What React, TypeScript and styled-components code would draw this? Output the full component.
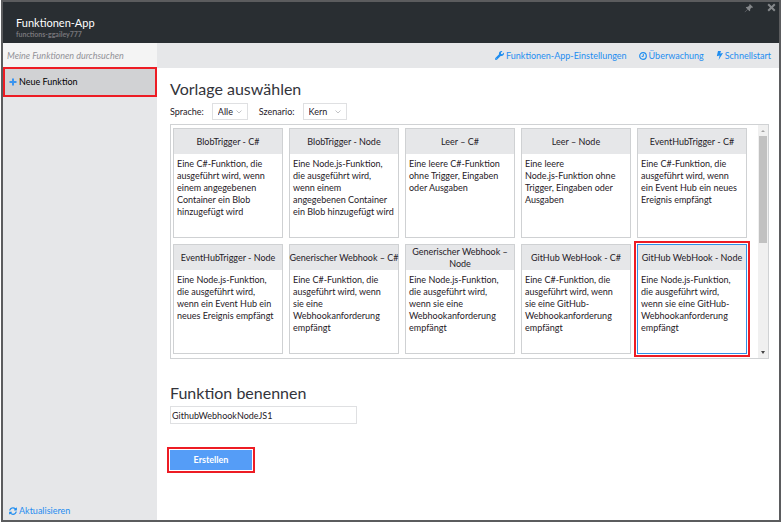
import React, { useState } from "react";
import styled, { createGlobalStyle } from "styled-components";
import { FaWrench, FaSyncAlt } from "react-icons/fa";

const GlobalStyle = createGlobalStyle`
  *, *::before, *::after { box-sizing: border-box; }
  body { margin: 0; background: #fff; }
  body, button, input, select {
    font-family: Lato, "Open Sans", sans-serif;
    font-size: 9px;
    line-height: 12px;
    color: #1f2027;
  }
`;

const Shell = styled.div`
  min-height: 100vh;
  padding: 0 1px 1px;
  display: flex;
`;

const Blade = styled.div`
  flex: 1;
  min-width: 0;
  display: flex;
  flex-direction: column;
  border: 2px solid #5b5c5e;
`;

const Header = styled.header`
  display: flex;
  justify-content: space-between;
  align-items: flex-start;
  height: 41px;
  padding: 0 2px 0 13px;
  background: #292e32;
`;

const AppTitle = styled.h1`
  margin: 14px 0 0;
  font-size: 11px;
  line-height: 14px;
  font-weight: 400;
  color: #fff;
`;

const AppName = styled.p`
  margin: 0;
  font-size: 7px;
  line-height: 9px;
  font-weight: 700;
  color: #77757a;
`;

const WindowActions = styled.div`
  display: flex;
  gap: 11px;
`;

const IconButton = styled.button`
  display: flex;
  padding: 1px;
  border: 0;
  background: none;
  color: #85888b;
  cursor: pointer;
`;

const Body = styled.div`
  flex: 1;
  display: flex;
`;

const Sidebar = styled.nav`
  flex: 0 0 154px;
  display: flex;
  flex-direction: column;
  background: #e6e7e9;
`;

const SearchInput = styled.input`
  width: 100%;
  height: 24px;
  padding: 0 4px;
  border: 0;
  background: #f4f4f4;
  font-style: italic;
  &::placeholder { color: #929298; opacity: 1; }
`;

const NewFunction = styled.button`
  display: flex;
  align-items: center;
  gap: 2px;
  height: 30px;
  padding: 0 4px;
  border: 2px solid #ed1c24;
  background: #d1d2d4;
  color: #000;
  cursor: pointer;
  svg { color: #3a94ef; }
`;

const ActionLink = styled.a`
  display: inline-flex;
  align-items: center;
  gap: 2px;
  color: #1f8df0;
  text-decoration: none;
`;

const SidebarFooter = styled.div`
  margin-top: auto;
  padding: 0 6px 2px;
`;

const Main = styled.main`
  flex: 1;
  min-width: 0;
  display: flex;
  flex-direction: column;
  background: #fff;
`;

const Toolbar = styled.div`
  display: flex;
  justify-content: flex-end;
  align-items: center;
  gap: 12px;
  height: 25px;
  padding: 0 8px;
  background: #e6e7e9;
`;

const Content = styled.div`
  padding: 11px 10px 12px 13px;
`;

const SectionTitle = styled.h2`
  margin: 0;
  font-size: 16px;
  line-height: 20px;
  font-weight: 400;
  color: #33343b;
`;

const Filters = styled.div`
  display: flex;
  gap: 11px;
  margin: 4px 0;
`;

const Filter = styled.label`
  display: flex;
  align-items: center;
  gap: 8px;
`;

const SelectBox = styled.span<{ $width: number }>`
  display: grid;
  align-items: center;
  width: ${(p) => p.$width}px;
  height: 17px;
  border: 1px solid #dfe0e2;
  & > * { grid-area: 1 / 1; }
  svg { justify-self: end; margin-right: 5px; pointer-events: none; }
`;

const Select = styled.select`
  appearance: none;
  width: 100%;
  height: 15px;
  padding: 0 5px;
  border: 0;
  background: transparent;
`;

const TemplateList = styled.div`
  display: flex;
  height: 235px;
  border: 1px solid #d0d2d4;
`;

const TemplateGrid = styled.div`
  flex: 1;
  display: grid;
  grid-template-columns: repeat(auto-fill, 110px);
  grid-auto-rows: 110px;
  gap: 6px;
  padding: 3px 2px;
`;

const Card = styled.button<{ $selected: boolean }>`
  display: flex;
  flex-direction: column;
  align-items: stretch;
  padding: 0;
  border: 1px solid ${(p) => (p.$selected ? "#2f8fe8" : "#cfd1d3")};
  outline: ${(p) => (p.$selected ? "2px solid #ed1c24" : "none")};
  outline-offset: 1px;
  background: #fff;
  text-align: left;
  cursor: pointer;
`;

const CardTitle = styled.span`
  display: flex;
  align-items: center;
  justify-content: center;
  height: 25px;
  background: #e6e7e9;
  text-align: center;
  white-space: pre;
`;

const CardText = styled.span`
  padding: 4px 3px;
  white-space: pre;
`;

const ScrollTrack = styled.div`
  width: 10px;
  display: flex;
  flex-direction: column;
  align-items: stretch;
  background: #f0f0f0;
`;

const ScrollThumb = styled.div`
  height: 107px;
  margin: 0 1px auto;
  background: #c1c1c1;
`;

const ScrollArrow = styled.svg`
  height: 11px;
  width: 10px;
`;

const NameField = styled.label`
  display: block;
  margin-top: 24px;
`;

const NameInput = styled.input`
  display: block;
  width: 187px;
  height: 18px;
  margin-top: 3px;
  padding: 0 1px;
  border: 1px solid #dfe0e2;
`;

const CreateButton = styled.button`
  width: 82px;
  height: 20px;
  margin-top: 26px;
  border: 0;
  outline: 2px solid #ed1c24;
  outline-offset: 1px;
  background: #559df7;
  color: #fff;
  font-weight: 700;
  cursor: pointer;
`;

const templates = [
  ["BlobTrigger - C#", "Eine C#-Funktion, die\nausgeführt wird, wenn\neinem angegebenen\nContainer ein Blob\nhinzugefügt wird"],
  ["BlobTrigger - Node", "Eine Node.js-Funktion,\ndie ausgeführt wird,\nwenn einem\nangegebenen Container\nein Blob hinzugefügt wird"],
  ["Leer – C#", "Eine leere C#-Funktion\nohne Trigger, Eingaben\noder Ausgaben"],
  ["Leer – Node", "Eine leere\nNode.js-Funktion ohne\nTrigger, Eingaben oder\nAusgaben"],
  ["EventHubTrigger - C#", "Eine C#-Funktion, die\nausgeführt wird, wenn\nein Event Hub ein neues\nEreignis empfängt"],
  ["EventHubTrigger - Node", "Eine Node.js-Funktion,\ndie ausgeführt wird,\nwenn ein Event Hub ein\nneues Ereignis empfängt"],
  ["Generischer Webhook – C#", "Eine C#-Funktion, die\nausgeführt wird, wenn\nsie eine\nWebhookanforderung\nempfängt"],
  ["Generischer Webhook –\nNode", "Eine Node.js-Funktion,\ndie ausgeführt wird,\nwenn sie eine\nWebhookanforderung\nempfängt"],
  ["GitHub WebHook - C#", "Eine C#-Funktion, die\nausgeführt wird, wenn\nsie eine GitHub-\nWebhookanforderung\nempfängt"],
  ["GitHub WebHook - Node", "Eine Node.js-Funktion,\ndie ausgeführt wird,\nwenn sie eine GitHub-\nWebhookanforderung\nempfängt"],
];

const Chevron = () => (
  <svg width="6" height="4" viewBox="0 0 6 4" fill="none" stroke="#c3c4c7">
    <path d="M.5.5 3 3 5.5.5" />
  </svg>
);

const PlusIcon = () => (
  <svg width="8" height="8" viewBox="0 0 8 8" fill="currentColor">
    <path d="M3 .5h2V3h2.5v2H5v2.5H3V5H.5V3H3z" />
  </svg>
);

const CloseIcon = () => (
  <svg width="9" height="9" viewBox="0 0 9 9" fill="none" stroke="currentColor" strokeWidth="2">
    <path d="M1.2 1.2l6.6 6.6M7.8 1.2 1.2 7.8" />
  </svg>
);

const ClockIcon = () => (
  <svg width="8" height="8" viewBox="0 0 8 8" fill="none" stroke="currentColor" strokeWidth="1.2">
    <circle cx="4" cy="4" r="3.3" />
    <path d="M4.3 2v2.4H2.6" strokeWidth="1" />
  </svg>
);

const PinIcon = () => (
  <svg width="10" height="10" viewBox="0 0 9 9" fill="currentColor">
    <path d="M5.2.8 8.2 3.8 7.4 4.2 6.9 4 5.6 5.4 5.5 7 4.9 7.4 3.4 5.9.8 8.4.6 8.2 3.1 5.6 1.6 4.1 2 3.5 3.6 3.4 5 2.1 4.8 1.6z" />
  </svg>
);

const BoltIcon = () => (
  <svg width="7" height="9" viewBox="0 0 7 9" fill="currentColor">
    <path d="M2 0h3L4.2 2.5 7 2 2.6 9l1-4.4L.8 5.2z" />
  </svg>
);

export default function App() {
  const [selected, setSelected] = useState(9);
  return (
    <>
      <GlobalStyle />
      <Shell>
        <Blade>
          <Header>
            <div>
              <AppTitle>Funktionen-App</AppTitle>
              <AppName>functions-ggailey777</AppName>
            </div>
            <WindowActions>
              <IconButton type="button" aria-label="Anheften">
                <PinIcon />
              </IconButton>
              <IconButton type="button" aria-label="Schließen">
                <CloseIcon />
              </IconButton>
            </WindowActions>
          </Header>
          <Body>
            <Sidebar>
              <SearchInput type="search" aria-label="Meine Funktionen durchsuchen" placeholder="Meine Funktionen durchsuchen" />
              <NewFunction type="button">
                <PlusIcon />
                Neue Funktion
              </NewFunction>
              <SidebarFooter>
                <ActionLink href="#aktualisieren">
                  <FaSyncAlt size={8} />
                  Aktualisieren
                </ActionLink>
              </SidebarFooter>
            </Sidebar>
            <Main>
              <Toolbar>
                <ActionLink href="#einstellungen">
                  <FaWrench size={9} />
                  Funktionen-App-Einstellungen
                </ActionLink>
                <ActionLink href="#ueberwachung">
                  <ClockIcon />
                  Überwachung
                </ActionLink>
                <ActionLink href="#schnellstart">
                  <BoltIcon />
                  Schnellstart
                </ActionLink>
              </Toolbar>
              <Content>
                <SectionTitle>Vorlage auswählen</SectionTitle>
                <Filters>
                  <Filter>
                    Sprache:
                    <SelectBox $width={36}>
                      <Select defaultValue="Alle">
                        <option>Alle</option>
                      </Select>
                      <Chevron />
                    </SelectBox>
                  </Filter>
                  <Filter>
                    Szenario:
                    <SelectBox $width={44}>
                      <Select defaultValue="Kern">
                        <option>Kern</option>
                      </Select>
                      <Chevron />
                    </SelectBox>
                  </Filter>
                </Filters>
                <TemplateList>
                  <TemplateGrid>
                    {templates.map(([title, text], i) => (
                      <Card key={title} type="button" $selected={i === selected} aria-pressed={i === selected} onClick={() => setSelected(i)}>
                        <CardTitle>{title}</CardTitle>
                        <CardText>{text}</CardText>
                      </Card>
                    ))}
                  </TemplateGrid>
                  <ScrollTrack aria-hidden="true">
                    <ScrollArrow viewBox="0 0 10 11" fill="#a3a3a3">
                      <path d="M3 7h4L5 5z" />
                    </ScrollArrow>
                    <ScrollThumb />
                    <ScrollArrow viewBox="0 0 10 11" fill="#444">
                      <path d="M3 4h4L5 7z" />
                    </ScrollArrow>
                  </ScrollTrack>
                </TemplateList>
                <NameField>
                  <SectionTitle>Funktion benennen</SectionTitle>
                  <NameInput type="text" defaultValue="GithubWebhookNodeJS1" />
                </NameField>
                <CreateButton type="button">Erstellen</CreateButton>
              </Content>
            </Main>
          </Body>
        </Blade>
      </Shell>
    </>
  );
}
